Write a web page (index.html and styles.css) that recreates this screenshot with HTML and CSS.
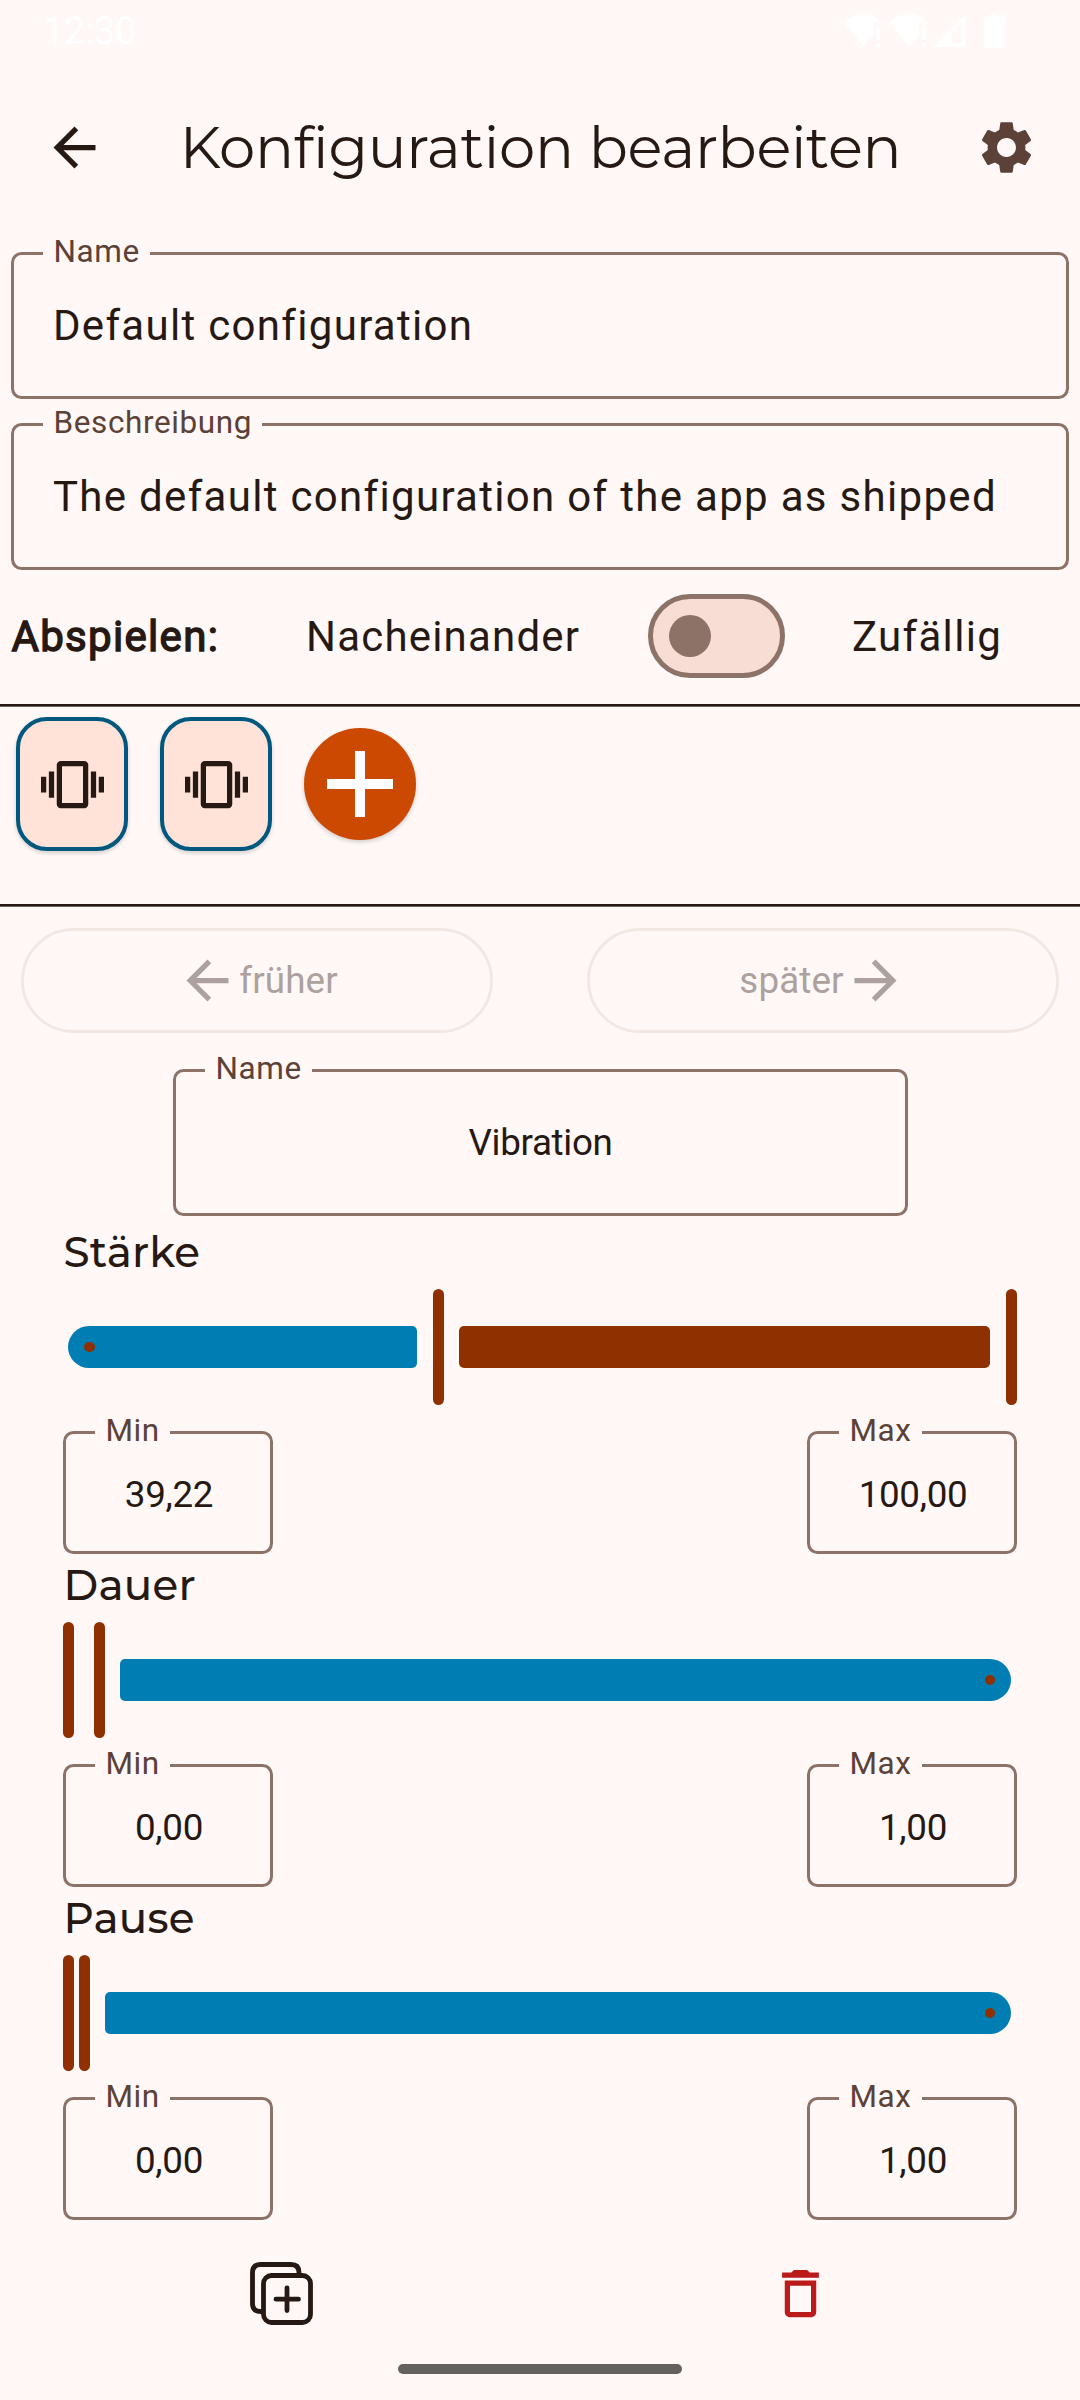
FILE: index.html
```html
<!DOCTYPE html>
<html lang="de">
<head>
<meta charset="utf-8">
<title>Konfiguration bearbeiten</title>
<link rel="stylesheet" href="styles.css">
</head>
<body>
<div class="screen">
  <div class="status-bar">
    <span class="clock">12:30</span>
    <svg class="status-icons" width="162" height="36" viewBox="0 0 162 36" fill="#fff">
      <path d="M0 9.500Q8 1 19.500 1Q31 1 38 9.500H29.500V22L19.500 33.500ZM32 14h4v13h-4zM32 30h4v4h-4z"/>
      <path d="M46 9.500Q54 1 65.500 1Q77 1 84 9.500H75V22L65.500 33.500ZM78 14h4v13h-4zM78 30h4v4h-4z"/>
      <path fill-rule="evenodd" d="M89 34L121.500 1V34ZM107.500 19.500V30H117.500V9.500Z"/>
      <path d="M146.500 1H154.500V3.500H158.500Q160.500 3.500 160.500 5.500V33Q160.500 35 158.500 35H142Q140 35 140 33V5.500Q140 3.500 142 3.500H146.500Z"/>
    </svg>
  </div>

  <header class="top-bar">
    <svg class="icon" viewBox="0 0 24 24"><path d="M20 11H7.830l5.590-5.590L12 4l-8 8 8 8 1.410-1.410L7.830 13H20v-2z"/></svg>
    <h1 class="title">Konfiguration bearbeiten</h1>
    <svg class="icon icon-settings" viewBox="0 0 24 24"><path d="M19.140 12.940c.04-.3.06-.61.06-.94 0-.32-.02-.64-.07-.94l2.030-1.580c.18-.14.23-.41.12-.61l-1.920-3.320c-.12-.22-.37-.29-.59-.22l-2.390.96c-.5-.38-1.030-.7-1.620-.94l-.36-2.540c-.04-.24-.24-.41-.48-.41h-3.840c-.24 0-.43.17-.47.41l-.36 2.540c-.59.24-1.130.57-1.620.94l-2.390-.96c-.22-.08-.47 0-.59.22L2.740 8.870c-.12.21-.08.47.12.61l2.030 1.580c-.05.3-.09.63-.09.94s.02.64.07.94l-2.030 1.580c-.18.14-.23.41-.12.61l1.920 3.320c.12.22.37.29.59.22l2.390-.96c.5.38 1.030.7 1.620.94l.36 2.540c.05.24.24.41.48.41h3.840c.24 0 .44-.17.47-.41l.36-2.540c.59-.24 1.130-.56 1.620-.94l2.390.96c.22.08.47 0 .59-.22l1.920-3.320c.12-.22.07-.47-.12-.61l-2.010-1.580zM12 15.600c-1.980 0-3.600-1.620-3.600-3.600s1.620-3.600 3.600-3.600 3.600 1.620 3.600 3.600-1.620 3.600-3.600 3.600z"/></svg>
  </header>

  <div class="config-fields">
    <div class="field"><span class="label">Name</span><span class="value">Default configuration</span></div>
    <div class="field"><span class="label">Beschreibung</span><span class="value">The default configuration of the app as shipped</span></div>
  </div>

  <div class="play-row">
    <span class="play-title">Abspielen:</span>
    <span class="play-sequence">Nacheinander</span>
    <span class="switch"><span class="switch-thumb"></span></span>
    <span class="play-random">Zufällig</span>
  </div>

  <div class="divider"></div>
  <div class="strip">
    <div class="card"><svg class="icon" viewBox="0 0 24 24"><path d="M0 15h2V9H0v6zm3 2h2V7H3v10zm19-8v6h2V9h-2zm-3 8h2V7h-2v10zM16.500 3h-9C6.670 3 6 3.670 6 4.500v15c0 .83.67 1.500 1.500 1.500h9c.83 0 1.500-.67 1.500-1.500v-15c0-.83-.67-1.500-1.500-1.500zM16 19H8V5h8v14z"/></svg></div>
    <div class="card"><svg class="icon" viewBox="0 0 24 24"><path d="M0 15h2V9H0v6zm3 2h2V7H3v10zm19-8v6h2V9h-2zm-3 8h2V7h-2v10zM16.500 3h-9C6.670 3 6 3.670 6 4.500v15c0 .83.67 1.500 1.500 1.500h9c.83 0 1.500-.67 1.500-1.500v-15c0-.83-.67-1.500-1.500-1.500zM16 19H8V5h8v14z"/></svg></div>
    <div class="add"><svg width="66" height="66" viewBox="0 0 66 66"><path fill="#fff" d="M28 0h10v28h28v10H38v28H28V38H0V28h28z"/></svg></div>
  </div>
  <div class="divider"></div>

  <div class="order-row">
    <div class="order-button">
      <svg class="icon" viewBox="0 0 24 24"><path d="M20 11H7.830l5.590-5.590L12 4l-8 8 8 8 1.410-1.410L7.830 13H20v-2z"/></svg>
      <span>früher</span>
    </div>
    <div class="order-button">
      <span>später</span>
      <svg class="icon" viewBox="0 0 24 24"><path d="M12 4l-1.410 1.410L16.170 11H4v2h12.170l-5.580 5.590L12 20l8-8z"/></svg>
    </div>
  </div>

  <div class="field item-name"><span class="label">Name</span><span class="value">Vibration</span></div>

  <section class="range">
    <h2 class="range-title">Stärke</h2>
    <div class="slider">
      <span class="track track-start" style="width: 349px"><span class="stop"></span></span>
      <span class="thumb"></span>
      <span class="track track-active"></span>
      <span class="thumb"></span>
    </div>
    <div class="limits">
      <div class="field"><span class="label">Min</span><span class="value">39,22</span></div>
      <div class="field"><span class="label">Max</span><span class="value">100,00</span></div>
    </div>
  </section>

  <section class="range">
    <h2 class="range-title">Dauer</h2>
    <div class="slider">
      <span class="thumb"></span>
      <span class="thumb" style="margin-left: 4.500px"></span>
      <span class="track track-end"><span class="stop"></span></span>
    </div>
    <div class="limits">
      <div class="field"><span class="label">Min</span><span class="value">0,00</span></div>
      <div class="field"><span class="label">Max</span><span class="value">1,00</span></div>
    </div>
  </section>

  <section class="range">
    <h2 class="range-title">Pause</h2>
    <div class="slider">
      <span class="thumb"></span>
      <span class="thumb" style="margin-left: -10.500px"></span>
      <span class="track track-end"><span class="stop"></span></span>
    </div>
    <div class="limits">
      <div class="field"><span class="label">Min</span><span class="value">0,00</span></div>
      <div class="field"><span class="label">Max</span><span class="value">1,00</span></div>
    </div>
  </section>

  <div class="actions">
    <div class="action">
      <svg width="63" height="63" viewBox="0 0 63 63" fill="none" stroke="#261812" stroke-width="4.800" stroke-linecap="round">
        <rect x="13.500" y="13.500" width="47" height="47" rx="8"/>
        <path stroke-linecap="butt" d="M12 49.500H10.500Q2.500 49.500 2.500 41.500V10.500Q2.500 2.500 10.500 2.500H41Q49 2.500 49 10.500V12"/>
        <path d="M37 26V48.500M26 37.200H48.500"/>
      </svg>
    </div>
    <div class="action">
      <svg class="icon icon-delete" viewBox="0 0 24 24"><path d="M6 19c0 1.100.9 2 2 2h8c1.100 0 2-.9 2-2V7H6v12zM8 9h8v10H8V9zm7.500-5l-1-1h-5l-1 1H5v2h14V4h-3.500z"/></svg>
    </div>
  </div>
  <div class="nav-handle"></div>
</div>
</body>
</html>
```
FILE: styles.css
```css
* { box-sizing: border-box; }

body {
  margin: 0;
  background: #fff8f6;
  color: #261812;
  font-family: Roboto, "Noto Sans", sans-serif;
}

.screen {
  display: flex;
  flex-direction: column;
  width: 1080px;
  height: 2400px;
  overflow: hidden;
  white-space: nowrap;
}

.icon {
  display: block;
  flex: none;
  width: 63px;
  height: 63px;
  fill: currentColor;
}

.status-bar {
  display: flex;
  justify-content: space-between;
  height: 68px;
  padding: 13px 74px 0 43px;
  color: #fff;
}

.clock {
  font-size: 38px;
  line-height: 36px;
  letter-spacing: -0.300px;
}

.top-bar {
  display: flex;
  align-items: center;
  justify-content: space-between;
  height: 159px;
  padding: 0 42px 0 43px;
}

.title {
  margin: 0;
  padding-bottom: 2px;
  font-family: Montserrat, Inter, sans-serif;
  font-size: 57.750px;
  font-weight: 400;
  letter-spacing: -0.260px;
}

.icon-settings { color: #5b4137; }

.config-fields {
  display: flex;
  flex-direction: column;
  gap: 24px;
  padding: 25px 11px 0;
}

.field {
  position: relative;
  display: flex;
  align-items: center;
  height: 147px;
  padding: 0 39px;
  border: 3px solid #8d7267;
  border-radius: 10.500px;
  font-size: 42px;
  letter-spacing: 1.310px;
}

/* The label sits on the outline and interrupts it. */
.label {
  position: absolute;
  top: -24px;
  left: 29px;
  padding: 0 10px 0 10.500px;
  background: #fff8f6;
  color: #5b4137;
  font-size: 31.500px;
  line-height: 42px;
  letter-spacing: 0.600px;
}

.play-row {
  display: flex;
  align-items: center;
  height: 84px;
  margin: 24px 0 26px;
  padding-left: 11.500px;
  font-size: 42px;
  letter-spacing: 1.310px;
}

.play-title {
  width: 294.500px;
  -webkit-text-stroke: 1.400px currentColor;
}

.play-sequence {
  width: 342px;
  letter-spacing: 1.200px;
}

.switch {
  display: flex;
  align-items: center;
  width: 137px;
  height: 84px;
  margin-right: 67px;
  padding-left: 15.500px;
  border: 5.500px solid #8d7267;
  border-radius: 42px;
  background: #f8ddd4;
}

.switch-thumb {
  width: 42px;
  height: 42px;
  border-radius: 50%;
  background: #8d7267;
}

.divider {
  flex: none;
  height: 3px;
  background: linear-gradient(#261812 2px, #71635e 2px);
}

.strip {
  display: flex;
  gap: 32px;
  height: 197px;
  padding: 10px 16px;
}

.card {
  display: flex;
  align-items: center;
  justify-content: center;
  width: 112px;
  height: 134px;
  border: 4px solid #00587e;
  border-radius: 31px;
  background: #ffe3d9;
  box-shadow: 0 2px 4px rgba(0, 0, 0, 0.18);
}

.add {
  display: flex;
  align-items: center;
  justify-content: center;
  width: 112px;
  height: 112px;
  margin-top: 11px;
  border-radius: 50%;
  background: #cb4900;
  box-shadow: 0 2px 4px rgba(0, 0, 0, 0.18);
}

.order-row {
  display: flex;
  justify-content: space-between;
  padding: 21px 21px 0;
}

.order-button {
  display: flex;
  align-items: center;
  justify-content: center;
  width: 472px;
  height: 105px;
  border: 3px solid #f2e8e3;
  border-radius: 53px;
  color: #aca19e;
  font-size: 36.750px;
  letter-spacing: 0.150px;
}

.item-name {
  width: 735px;
  margin: 36px 0 5px 173px;
}

.item-name,
.limits .field {
  justify-content: center;
  font-size: 36.750px;
  letter-spacing: -0.300px;
}

.range { padding: 0 63px; }

.range-title {
  margin: 0 0 6px;
  padding-left: 0.500px;
  font-family: Montserrat, Inter, sans-serif;
  font-size: 42px;
  font-weight: 500;
  line-height: 62px;
  letter-spacing: 0.250px;
}

.slider {
  display: flex;
  align-items: center;
  gap: 15.500px;
  height: 116px;
}

.thumb {
  flex: none;
  width: 11px;
  height: 116px;
  border-radius: 5.500px;
  background: #8f3000;
}

.track {
  display: flex;
  align-items: center;
  height: 42px;
  border-radius: 5px;
  background: #007db2;
}

.track-start {
  margin-left: 5px;
  padding-left: 16px;
  border-radius: 21px 5px 5px 21px;
}

.track-active {
  flex: 1;
  margin-right: 0.500px;
  background: #8f3000;
}

.track-end {
  flex: 1;
  justify-content: flex-end;
  margin: 0 6px 0 -0.200px;
  padding-right: 16px;
  border-radius: 5px 21px 21px 5px;
}

.stop {
  width: 10.500px;
  height: 10.500px;
  border-radius: 50%;
  background: #8f3000;
}

.limits {
  display: flex;
  justify-content: space-between;
  margin-top: 26px;
}

.limits .field {
  width: 210px;
  height: 123px;
  padding: 3px 38px 0 40px;
}

.actions {
  display: flex;
  margin-top: 42px;
  padding: 0 20px 0 22px;
}

.action {
  display: flex;
  flex: 1;
  justify-content: center;
}

.icon-delete { color: #ba1a1a; }

.nav-handle {
  flex: none;
  width: 284px;
  height: 10px;
  margin: 39px auto 0;
  border-radius: 5px;
  background: #65615f;
}
```
